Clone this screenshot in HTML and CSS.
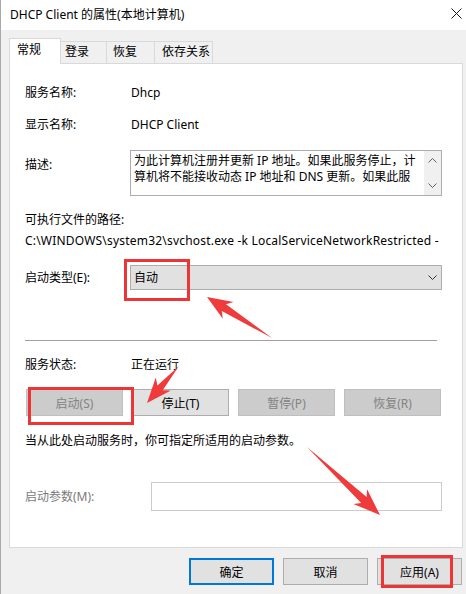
FILE: index.html
```html
<!DOCTYPE html>
<html lang="zh-CN">
<head>
<meta charset="utf-8">
<title>DHCP Client 的属性(本地计算机)</title>
<link rel="stylesheet" href="styles.css">
</head>
<body>
<div class="window">
  <div class="titlebar">
    <span class="title">DHCP Client 的属性(本地计算机)</span>
    <svg class="close" width="11" height="11" viewBox="0 0 11 11"><path d="M0.5 0.5 L10.5 10.5 M10.5 0.5 L0.5 10.5" stroke="#1a1a1a" stroke-width="1"/></svg>
  </div>
  <div class="body">
    <div class="tabs">
      <div class="tab tab-active t1">常规</div>
      <div class="tab t2">登录</div>
      <div class="tab t3">恢复</div>
      <div class="tab t4">依存关系</div>
    </div>
    <div class="panel">
      <div class="row r-name"><span class="label">服务名称:</span><span class="value">Dhcp</span></div>
      <div class="row r-disp"><span class="label">显示名称:</span><span class="value">DHCP Client</span></div>
      <div class="row r-desc">
        <span class="label desc-label">描述:</span>
        <div class="textbox">
          <div class="tb-text">
            <div class="tb-line">为此计算机注册并更新 IP 地址。如果此服务停止，计</div>
            <div class="tb-line">算机将不能接收动态 IP 地址和 DNS 更新。如果此服</div>
          </div>
          <div class="scrollbar">
            <svg width="9" height="5" viewBox="0 0 9 5"><path d="M0.5 4.5 L4.5 0.5 L8.5 4.5" fill="none" stroke="#606060" stroke-width="1"/></svg>
            <svg width="9" height="5" viewBox="0 0 9 5"><path d="M0.5 0.5 L4.5 4.5 L8.5 0.5" fill="none" stroke="#606060" stroke-width="1"/></svg>
          </div>
        </div>
      </div>
      <div class="plain r-exec">可执行文件的路径:</div>
      <div class="plain r-path">C:\WINDOWS\system32\svchost.exe -k LocalServiceNetworkRestricted -</div>
      <div class="row r-type">
        <span class="label">启动类型(E):</span>
        <div class="combo">
          <span>自动</span>
          <svg width="9" height="5" viewBox="0 0 9 5"><path d="M0.5 0.5 L4.5 4.5 L8.5 0.5" fill="none" stroke="#333" stroke-width="1"/></svg>
        </div>
      </div>
      <div class="sep"></div>
      <div class="row r-status"><span class="label">服务状态:</span><span class="value">正在运行</span></div>
      <div class="btnrow">
        <button class="btn disabled">启动(S)</button>
        <button class="btn">停止(T)</button>
        <button class="btn disabled">暂停(P)</button>
        <button class="btn disabled">恢复(R)</button>
      </div>
      <div class="plain r-hint">当从此处启动服务时，你可指定所适用的启动参数。</div>
      <div class="row r-param">
        <span class="label label-param muted">启动参数(M):</span>
        <div class="param-input"></div>
      </div>
    </div>
    <div class="footer">
      <button class="btn fbtn default">确定</button>
      <button class="btn fbtn">取消</button>
      <button class="btn fbtn">应用(A)</button>
    </div>
  </div>

  <div class="mark mark-type"></div>
  <div class="mark mark-start"></div>
  <div class="mark mark-apply"></div>
  <svg class="arrows" width="466" height="594" viewBox="0 0 466 594">
    <polygon id="a1" fill="#ef3b3b"/>
    <polygon id="a2" fill="#ef3b3b"/>
    <polygon id="a3" fill="#ef3b3b"/>
  </svg>
</div>
<script src="script.js"></script>
</body>
</html>
```
FILE: script.js
```js
function arrow(id, tx, ty, px, py, L, W, w) {
  var dx = px - tx, dy = py - ty;
  var len = Math.sqrt(dx * dx + dy * dy);
  var ux = dx / len, uy = dy / len;
  var nx = -uy, ny = ux;
  var bx = px - ux * L, by = py - uy * L;
  var cx = px - ux * (L + 5), cy = py - uy * (L + 5);
  var pts = [
    [tx, ty],
    [bx + nx * w, by + ny * w],
    [cx + nx * W, cy + ny * W],
    [px, py],
    [cx - nx * W, cy - ny * W],
    [bx - nx * w, by - ny * w]
  ];
  document.getElementById(id).setAttribute('points', pts.map(function (p) { return p[0].toFixed(1) + ',' + p[1].toFixed(1); }).join(' '));
}
arrow('a1', 271, 338, 206, 297, 20, 10, 4);
arrow('a2', 178, 366, 146, 403, 20, 10, 3.5);
arrow('a3', 306, 447, 379, 515, 22, 10, 4);
```
FILE: styles.css
```css
* { box-sizing: border-box; }
html, body { margin: 0; padding: 0; background: #f0f0f0; }
body {
  font-family: "Noto Sans", "Noto Sans CJK SC", sans-serif;
  font-size: 12px;
  color: #000;
}
.window {
  position: relative;
  width: 466px;
  height: 594px;
  background: #f0f0f0;
  overflow: hidden;
  border-left: 1px solid #a9a9a9;
}
.titlebar {
  height: 30px;
  background: #fff;
  display: flex;
  align-items: center;
  justify-content: space-between;
  padding: 0 4px 1px 9px;
}
.title { font-size: 12px; line-height: 16px; }
.close { margin-bottom: 2px; }

.body { padding: 8px 3px 0 8px; }

.tabs { display: flex; align-items: flex-end; height: 25px; }
.tab {
  height: 22px;
  line-height: 20px;
  border: 1px solid #d9d9d9;
  border-bottom: none;
  background: #f0f0f0;
  margin-left: -1px;
}
.tab-active {
  position: relative;
  z-index: 1;
  height: 26px;
  margin-bottom: -1px;
  background: #fff;
  line-height: 22px;
  margin-left: 0;
}
.t1 { width: 52px; padding-left: 7px; }
.t2 { width: 47px; padding-left: 4px; }
.t3 { width: 49px; padding-left: 6px; }
.t4 { width: 59px; padding-left: 7px; }

.panel {
  height: 485px;
  background: #fff;
  border: 1px solid #d9d9d9;
  padding: 21px 20px 0 15px;
}
.row { display: flex; align-items: center; line-height: 16px; }
.label { width: 106px; flex: none; }
.value { white-space: nowrap; }
.plain { line-height: 16px; white-space: nowrap; }

.r-disp { margin-top: 16px; }
.r-desc { margin-top: 17px; align-items: flex-start; }
.desc-label { padding-top: 7px; }
.textbox {
  margin-left: -1px;
  width: 312px;
  height: 46px;
  border: 1px solid #abadb3;
  display: flex;
}
.tb-text { flex: 1; padding: 2px 0 0 3px; }
.tb-line { line-height: 16px; white-space: nowrap; }
.scrollbar {
  width: 17px;
  flex: none;
  background: #f0f0f0;
  display: flex;
  flex-direction: column;
  justify-content: space-between;
  align-items: center;
  padding: 7px 0 7px;
}
.r-exec { margin-top: 16px; }
.r-path { margin-top: 5px; letter-spacing: 0.2px; }

.r-type { margin-top: 16px; }
.combo {
  margin-left: -1px;
  width: 312px;
  height: 25px;
  background: #e1e1e1;
  border: 1px solid #adadad;
  display: flex;
  align-items: center;
  justify-content: space-between;
  padding: 0 4px 0 3px;
}
.sep { margin: 50px 5px 0 0; height: 1px; background: #a0a0a0; }
.r-status { margin-top: 16px; }

.btn {
  font-family: inherit;
  font-size: 12px;
  color: #000;
  background: #e1e1e1;
  border: 1px solid #adadad;
  height: 27px;
  padding: 0;
  margin: 0;
}
.btn.disabled { background: #cccccc; border-color: #bfbfbf; color: #838383; }
.btnrow {
  margin: 16px 1px 0 1px;
  display: grid;
  grid-template-columns: repeat(4, 1fr);
  column-gap: 9px;
}
.r-hint { margin-top: 17px; }
.r-param { margin-top: 33px; }
.label-param { width: 126px; }
.muted { color: #7a7a7a; }
.param-input {
  width: 291px;
  height: 29px;
  border: 1px solid #cccccc;
  background: #fff;
}

.footer {
  display: flex;
  justify-content: flex-end;
  gap: 9px;
  margin-top: 10px;
  padding-right: 1px;
}
.fbtn { width: 85px; }
.fbtn.default { border: 2px solid #0078d7; }

.mark {
  position: absolute;
  border: 3px solid #ee3535;
  pointer-events: none;
}
.mark-type { left: 123px; top: 259px; width: 66px; height: 42px; }
.mark-start { left: 27px; top: 387px; width: 106px; height: 38px; }
.mark-apply { left: 380px; top: 555px; width: 72px; height: 33px; }
.arrows { position: absolute; left: 0; top: 0; pointer-events: none; }
```
